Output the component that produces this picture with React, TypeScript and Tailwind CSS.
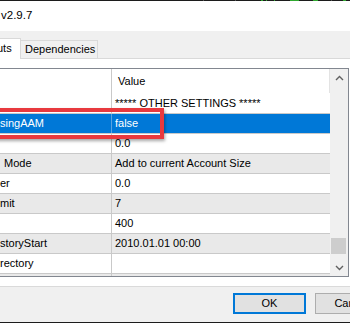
import React from "react";

type Row = { name: string; value: string; sel?: boolean; pad?: number };

const rows: Row[] = [
  { name: "", value: "***** OTHER SETTINGS *****" },
  { name: "singAAM", value: "false", sel: true },
  { name: "", value: "0.0" },
  { name: "Mode", value: "Add to current Account Size", pad: 4 },
  { name: "er", value: "0.0" },
  { name: "mit", value: "7" },
  { name: "", value: "400" },
  { name: "storyStart", value: "2010.01.01 00:00" },
  { name: "rectory", value: "" },
  { name: "", value: "" },
];

function GridRow({ r, i }: { r: Row; i: number }) {
  const bg = r.sel ? "bg-[#0078d7] text-white" : i % 2 === 0 ? "bg-white" : "bg-[#e9e9e9]";
  return (
    <div className={`flex h-[20px] shrink-0 border-b border-[#c9c9c9] ${bg}`}>
      <div
        className={`w-[112px] shrink-0 border-r ${r.sel ? "border-[#5aa3e0]" : "border-[#c9c9c9]"} flex items-center whitespace-nowrap overflow-hidden ${r.pad ? "pl-[4px]" : "pl-0"}`}
      >
        {r.name}
      </div>
      <div className="flex-1 flex items-center pl-[3px] whitespace-nowrap overflow-hidden">{r.value}</div>
    </div>
  );
}

export default function App() {
  return (
    <div className="w-[350px] h-[323px] overflow-hidden flex flex-col bg-[#f0f0f0] text-[11px] text-black font-['Liberation_Sans',Arial,sans-serif] relative">
      {/* top dark strip */}
      <div className="h-[1px] shrink-0 bg-[#1c1c1c] relative">
        <span className="absolute left-[203px] top-0 w-[1px] h-[1px] bg-[#555]" />
        <span className="absolute left-[235px] top-0 w-[1px] h-[1px] bg-[#555]" />
        <span className="absolute left-[261px] top-0 w-[2px] h-[1px] bg-[#2fa82f]" />
        <span className="absolute left-[266px] top-0 w-[1px] h-[1px] bg-[#2fa82f]" />
        <span className="absolute left-[274px] top-0 w-[1px] h-[1px] bg-[#2fa82f]" />
        <span className="absolute left-[290px] top-0 w-[9px] h-[1px] bg-[#2fa82f]" />
        <span className="absolute left-[313px] top-0 w-[5px] h-[1px] bg-[#2fa82f]" />
        <span className="absolute left-[331px] top-0 w-[1px] h-[1px] bg-[#555]" />
        <span className="absolute left-[343px] top-0 w-[3px] h-[1px] bg-[#2fa82f]" />
      </div>

      {/* title */}
      <div className="h-[30px] shrink-0 bg-white flex items-center pl-[1px] text-[11.5px]">v2.9.7</div>

      {/* tabs */}
      <div className="h-[27px] shrink-0 flex items-end">
        <div className="w-[21px] h-[20px] bg-white border-t border-r border-[#d9d9d9] flex items-center overflow-hidden">
          <span className="ml-[-3px]">uts</span>
        </div>
        <div className="w-[77px] h-[18px] border-t border-r border-[#d9d9d9] bg-[#f0f0f0] flex items-center pl-[4px]">
          Dependencies
        </div>
      </div>
      <div className="h-[1px] shrink-0 flex">
        <div className="w-[20px] bg-white" />
        <div className="flex-1 bg-[#d9d9d9]" />
      </div>

      {/* tab panel */}
      <div className="shrink-0 bg-white pt-[9px] pb-[9px] border-b border-[#dadada]">
        <div className="ml-[-1px] w-[350px] h-[209px] border border-[#828790] flex overflow-hidden">
          <div className="w-[330px] shrink-0 flex flex-col overflow-hidden">
            <div className="h-[25px] shrink-0 flex bg-white">
              <div className="w-[112px] shrink-0 border-r border-[#c9c9c9]" />
              <div className="flex-1 flex items-center pl-[6px]">Value</div>
              <div className="w-[1px] h-[24px] bg-[#e3e3e3]" />
            </div>
            {rows.map((r, i) => (
              <GridRow key={i} r={r} i={i} />
            ))}
          </div>
          {/* scrollbar */}
          <div className="w-[18px] shrink-0 bg-[#f0f0f0] flex flex-col">
            <div className="h-[17px] shrink-0 flex items-center justify-center">
              <svg width="9" height="6" viewBox="0 0 9 6">
                <path d="M1 5 L4.5 1.5 L8 5" fill="none" stroke="#606060" strokeWidth="1.4" />
              </svg>
            </div>
            <div className="h-[152px] shrink-0" />
            <div className="h-[16px] shrink-0 ml-[1px] w-[15px] bg-[#cdcdcd]" />
            <div className="flex-1" />
            <div className="h-[17px] shrink-0 flex items-center justify-center">
              <svg width="9" height="6" viewBox="0 0 9 6">
                <path d="M1 1 L4.5 4.5 L8 1" fill="none" stroke="#606060" strokeWidth="1.4" />
              </svg>
            </div>
          </div>
        </div>
      </div>

      {/* buttons */}
      <div className="h-[35px] shrink-0 flex items-start pt-[6px] pl-[233px] gap-[9px] overflow-hidden">
        <div className="w-[73px] h-[21px] shrink-0 border-2 border-[#0078d7] bg-[#e1e1e1] flex items-center justify-center">
          OK
        </div>
        <div className="w-[73px] h-[21px] shrink-0 border border-[#adadad] bg-[#e1e1e1] flex items-center justify-center">
          Cancel
        </div>
      </div>
      <div className="h-[1px] shrink-0 bg-[#1c1c1c]" />

      {/* red annotation box */}
      <div className="absolute left-[-4px] top-[108px] w-[168px] h-[31px] border-[4px] border-[#e8393e] shadow-[1px_2px_3px_rgba(0,0,0,0.35)]" />
    </div>
  );
}
